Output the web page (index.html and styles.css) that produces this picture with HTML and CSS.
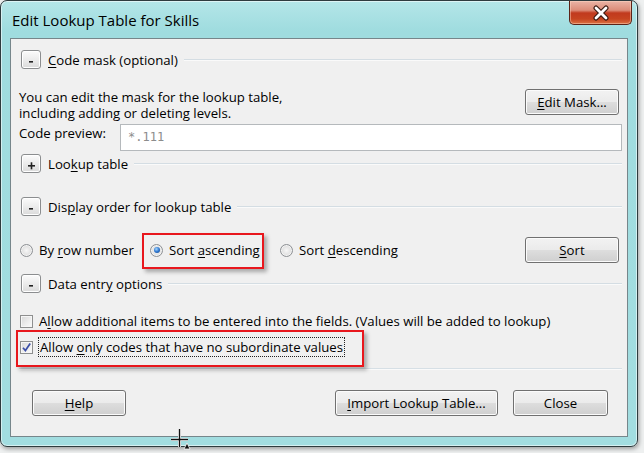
FILE: index.html
```html
<!DOCTYPE html>
<html>
<head>
<meta charset="utf-8">
<title>Edit Lookup Table for Skills</title>
<link rel="stylesheet" href="styles.css">
</head>
<body>
<div class="window">
  <div class="titlebar">
    <span class="title">Edit Lookup Table for Skills</span>
    <div class="close-btn">
      <svg width="24" height="16" viewBox="0 0 24 16">
        <path d="M7 3 L17 13 M17 3 L7 13" stroke="#3a1a12" stroke-width="5" stroke-linecap="round" fill="none"/>
        <path d="M7 3 L17 13 M17 3 L7 13" stroke="#ffffff" stroke-width="2.8" stroke-linecap="round" fill="none"/>
      </svg>
    </div>
  </div>
  <div class="client">
    <div class="hdr hdr-mask">
      <span class="tog"><svg width="8" height="8" viewBox="0 0 8 8"><rect x="2" y="4" width="4" height="1.6" fill="#222"/></svg></span>
      <span class="hlabel"><u>C</u>ode mask (optional)</span>
      <span class="rule"></span>
    </div>
    <div class="mask-row">
      <div class="desc">
        <span class="dline">You can edit the mask for the lookup table,</span>
        <span class="dline">including adding or deleting levels.</span>
      </div>
      <button class="btn btn-side"><u>E</u>dit Mask...</button>
    </div>
    <div class="preview-row">
      <span class="plabel">Code preview:</span>
      <div class="input">*.111</div>
    </div>
    <div class="hdr hdr-lookup">
      <span class="tog"><svg width="9" height="9" viewBox="0 0 9 9"><rect x="1" y="4" width="7" height="1.6" fill="#222"/><rect x="3.7" y="1.3" width="1.6" height="7" fill="#222"/></svg></span>
      <span class="hlabel">Loo<u>k</u>up table</span>
      <span class="rule"></span>
    </div>
    <div class="hdr hdr-order">
      <span class="tog"><svg width="8" height="8" viewBox="0 0 8 8"><rect x="2" y="4" width="4" height="1.6" fill="#222"/></svg></span>
      <span class="hlabel">Dis<u>p</u>lay order for lookup table</span>
      <span class="rule"></span>
    </div>
    <div class="radio-row">
      <label class="ropt ropt-a"><span class="radio"></span><span>By <u>r</u>ow number</span></label>
      <label class="ropt ropt-b"><span class="radio on"><span class="dot"></span></span><span>Sort <u>a</u>scending</span></label>
      <label class="ropt ropt-c"><span class="radio"></span><span>Sort <u>d</u>escending</span></label>
      <button class="btn btn-side"><u>S</u>ort</button>
    </div>
    <div class="hdr hdr-entry">
      <span class="tog"><svg width="8" height="8" viewBox="0 0 8 8"><rect x="2" y="4" width="4" height="1.6" fill="#222"/></svg></span>
      <span class="hlabel">Data entr<u>y</u> options</span>
      <span class="rule"></span>
    </div>
    <label class="check check-1"><span class="cbox"></span><span class="ctext">A<u>l</u>low additional items to be entered into the fields. (Values will be added to lookup)</span></label>
    <label class="check check-2"><span class="cbox"><svg width="11" height="11" viewBox="0 0 11 11"><path d="M2 5.8 L4.4 8.6 L9.2 1.6" stroke="#3b4ea8" stroke-width="1.7" fill="none"/></svg></span><span class="ctext focus">Allow <u>o</u>nly codes that have no subordinate values</span></label>
    <div class="sep"></div>
    <div class="footer">
      <button class="btn btn-help"><u>H</u>elp</button>
      <button class="btn btn-import"><u>I</u>mport Lookup Table...</button>
      <button class="btn btn-close">Close</button>
    </div>
  </div>
  <div class="mark mark-asc"></div>
  <div class="mark mark-only"></div>
  <svg class="cursor" width="22" height="22" viewBox="0 0 22 22">
    <path d="M10.5 1 V19 M2 11.5 H19" stroke="#ffffff" stroke-width="3" fill="none"/>
    <path d="M10.5 1 V19 M2 11.5 H19" stroke="#111111" stroke-width="1.4" fill="none"/>
    <path d="M15 21 L18 15 L21 21 Z" fill="#111" stroke="#fff" stroke-width="0.8"/>
  </svg>
</div>
</body>
</html>
```

FILE: styles.css
```css
html, body {
  margin: 0;
  padding: 0;
}
body {
  width: 644px;
  height: 453px;
  background: #eef0f0;
  font-family: "Open Sans", "Noto Sans", sans-serif;
  font-size: 13.2px;
  color: #000;
  overflow: hidden;
}
u {
  text-decoration: underline;
  text-underline-offset: 2px;
}
.window {
  position: relative;
  box-sizing: border-box;
  width: 638px;
  height: 447px;
  border: 1px solid #2e3b3e;
  border-radius: 7px;
  background: linear-gradient(180deg, #b4e6e8 0px, #9fdcdf 30px, #a2dde0 100%);
  box-shadow: inset 0 0 0 1px rgba(255,255,255,0.55), 1px 2px 4px rgba(0,0,0,0.35);
  display: flex;
  flex-direction: column;
}
.titlebar {
  height: 37px;
  display: flex;
  align-items: flex-start;
  padding-left: 11px;
}
.title {
  margin-top: 9px;
  font-size: 15px;
  line-height: 20px;
  color: #000;
}
.close-btn {
  margin-left: auto;
  margin-right: 5px;
  box-sizing: border-box;
  width: 63px;
  height: 24px;
  border: 1px solid #5b2318;
  border-top: none;
  border-radius: 0 0 5px 5px;
  background: linear-gradient(180deg, #eab4a6 0%, #dc8c78 40%, #c13a1e 52%, #c64420 78%, #dc7244 100%);
  box-shadow: inset 0 0 0 1px rgba(255,220,200,0.45);
  display: flex;
  align-items: center;
  justify-content: center;
}
.client {
  box-sizing: border-box;
  margin: 0 9px;
  height: 399px;
  border: 1px solid #76868b;
  background: #f0f0f0;
  padding: 0 5px 0 8px;
  display: flex;
  flex-direction: column;
}
.hdr {
  height: 19px;
  display: flex;
  align-items: center;
}
.hdr-mask { margin-top: 11px; }
.hdr-lookup { margin-top: 3px; }
.hdr-order { margin-top: 24px; }
.hdr-entry { margin-top: 11px; }
.tog {
  box-sizing: border-box;
  width: 20px;
  height: 19px;
  margin-left: 2px;
  border: 1px solid #8b8d8f;
  border-radius: 3px;
  background: linear-gradient(180deg, #fbfbfb 0%, #ececec 50%, #dadada 100%);
  box-shadow: inset 0 0 0 1px #fff;
  display: flex;
  align-items: center;
  justify-content: center;
}
.tog svg { margin-top: 3px; }
.hlabel {
  margin-left: 7px;
  line-height: 18px;
  white-space: nowrap;
}
.rule {
  flex: 1;
  height: 1px;
  margin-left: 6px;
  background: #d4dde3;
  box-shadow: 0 1px 0 #fafafa;
}
.mask-row {
  margin-top: 20px;
  display: flex;
  align-items: flex-start;
}
.desc {
  display: flex;
  flex-direction: column;
}
.dline {
  height: 16px;
  line-height: 16px;
  white-space: nowrap;
}
.btn {
  box-sizing: border-box;
  height: 26px;
  padding: 0;
  border: 1px solid #707070;
  border-radius: 3px;
  background: linear-gradient(180deg, #f2f2f2 0%, #ebebeb 48%, #dddddd 52%, #cfcfcf 100%);
  box-shadow: inset 0 0 0 1px #fbfbfb;
  font-family: inherit;
  font-size: 13.2px;
  color: #000;
  text-align: center;
}
.btn-side {
  width: 94px;
  margin-left: auto;
  margin-right: 3px;
}
.preview-row {
  margin-top: 3px;
  height: 27px;
  display: flex;
  align-items: flex-start;
}
.plabel {
  width: 101px;
  line-height: 16px;
  padding-top: 1px;
}
.input {
  flex: 1;
  box-sizing: border-box;
  height: 27px;
  border: 1px solid #b5b9bc;
  background: #fff;
  padding-left: 7px;
  font-family: "DejaVu Sans Mono", monospace;
  font-size: 12px;
  line-height: 25px;
  color: #8c8c8c;
}
.radio-row {
  margin-top: 21px;
  height: 26px;
  display: flex;
  align-items: center;
}
.ropt {
  display: flex;
  align-items: center;
  gap: 6px;
  white-space: nowrap;
}
.ropt-a { width: 130px; margin-left: 1px; }
.ropt-b { width: 130px; }
.radio {
  box-sizing: border-box;
  width: 13px;
  height: 13px;
  border-radius: 50%;
  border: 1px solid #8d9094;
  background: radial-gradient(circle at 50% 50%, #f7f7f7 0%, #e6e6e6 45%, #cfcfcf 100%);
  box-shadow: inset 0 0 0 1px #f4f4f4;
  display: flex;
  align-items: center;
  justify-content: center;
}
.dot {
  width: 6px;
  height: 6px;
  border-radius: 50%;
  background: radial-gradient(circle at 40% 35%, #a6d7ff 0%, #2f78d0 50%, #123f82 100%);
}
.check {
  display: flex;
  align-items: center;
  margin-left: 1px;
  white-space: nowrap;
}
.check-1 {
  margin-top: 20px;
  height: 16px;
}
.check-2 {
  margin-top: 8px;
  height: 20px;
}
.cbox {
  box-sizing: border-box;
  width: 13px;
  height: 13px;
  border: 1px solid #8e8f8f;
  background: linear-gradient(135deg, #d8d8d8 0%, #eeeeee 60%, #fbfbfb 100%);
  box-shadow: inset 0 0 0 1px #f6f6f6;
  display: flex;
  align-items: center;
  justify-content: center;
}
.ctext {
  margin-left: 6px;
  line-height: 16px;
}
.ctext.focus {
  margin-left: 5px;
  padding: 1px;
  border: 1px dotted #222;
  line-height: 16px;
}
.sep {
  margin-top: 11px;
  height: 1px;
  background: #d6dfe5;
  box-shadow: 0 1px 0 #fafafa;
}
.footer {
  margin-top: 21px;
  display: flex;
  align-items: center;
}
.btn-help {
  width: 94px;
  margin-left: 13px;
}
.btn-import {
  width: 163px;
  margin-left: auto;
}
.btn-close {
  width: 95px;
  margin-left: 15px;
  margin-right: 14px;
}
.mark {
  position: absolute;
  box-sizing: border-box;
  border: 2px solid #e8171d;
  box-shadow: 3px 3px 4px rgba(0,0,0,0.3);
}
.mark-asc {
  left: 141px;
  top: 232px;
  width: 122px;
  height: 36px;
}
.mark-only {
  left: 15px;
  top: 329px;
  width: 348px;
  height: 37px;
}
.cursor {
  position: absolute;
  left: 168px;
  top: 427px;
}
```
